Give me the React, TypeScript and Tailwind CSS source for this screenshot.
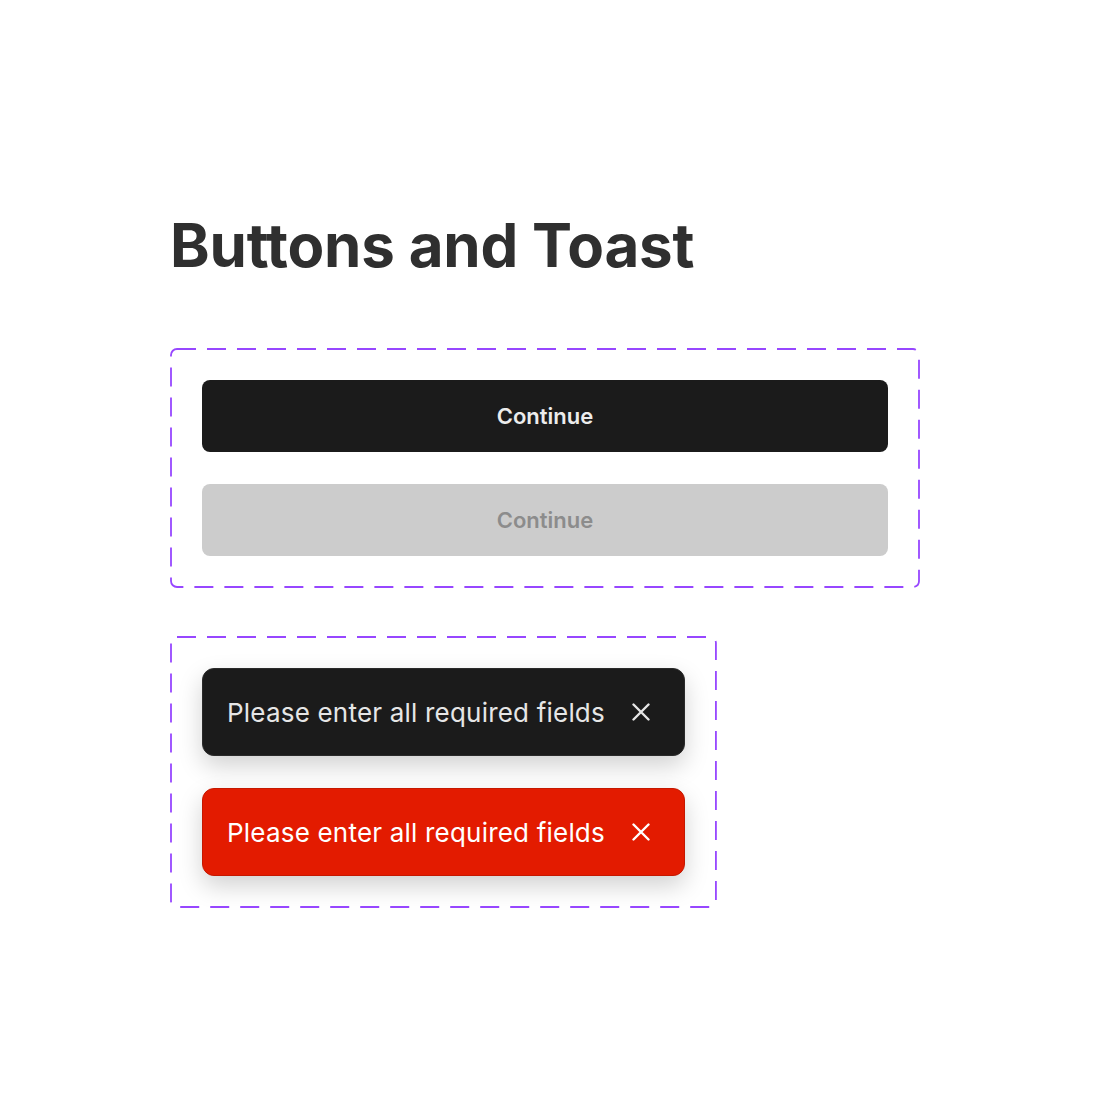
import React from 'react';

function DashedFrame({ children }: { children: React.ReactNode }) {
  return (
    <div className="relative p-8">
      <svg className="pointer-events-none absolute inset-0 h-full w-full overflow-visible" aria-hidden="true">
        <rect
          x="1"
          y="1"
          rx="6"
          className="w-[calc(100%-2px)] h-[calc(100%-2px)]"
          fill="none"
          stroke="#9747FF"
          strokeWidth="1.8"
          strokeDasharray="19 11"
        />
      </svg>
      {children}
    </div>
  );
}

function CloseIcon() {
  return (
    <svg width="18" height="18" viewBox="0 0 18 18" aria-hidden="true">
      <path d="M1.5 1.5L16.5 16.5M16.5 1.5L1.5 16.5" stroke="currentColor" strokeWidth="2.4" strokeLinecap="round" />
    </svg>
  );
}

function Toast({ variant }: { variant: 'dark' | 'error' }) {
  const tone =
    variant === 'dark'
      ? 'bg-[#1b1b1b] border-[#2a2a2a] text-[#e6e6e6]'
      : 'bg-[#e31b00] border-[#c51800] text-white';
  return (
    <div
      className={`flex h-[88px] items-center gap-[27px] rounded-xl border pl-6 pr-[34px] shadow-[0_10px_24px_rgba(0,0,0,0.18)] ${tone}`}
    >
      <span className="text-[26px] tracking-[0.2px]">Please enter all required fields</span>
      <CloseIcon />
    </div>
  );
}

export default function App() {
  return (
    <div className="min-h-[1110px] bg-white pl-[170px] pt-[205px] font-['Inter','Liberation_Sans',sans-serif]">
      <h1 className="text-[60px] font-bold leading-[80px] tracking-[-0.2px] text-[#2f2f2f]">Buttons and Toast</h1>

      <div className="mt-[63px] w-[750px]">
        <DashedFrame>
          <div className="flex flex-col gap-8">
            <button className="h-[72px] w-full rounded-lg bg-[#1b1b1b] text-[22px] font-semibold text-[#ececec]">
              Continue
            </button>
            <button disabled className="h-[72px] w-full rounded-lg bg-[#cccccc] text-[22px] font-semibold text-[#8c8c8c]">
              Continue
            </button>
          </div>
        </DashedFrame>
      </div>

      <div className="mt-12 inline-block">
        <DashedFrame>
          <div className="flex flex-col items-start gap-8">
            <Toast variant="dark" />
            <Toast variant="error" />
          </div>
        </DashedFrame>
      </div>
    </div>
  );
}
